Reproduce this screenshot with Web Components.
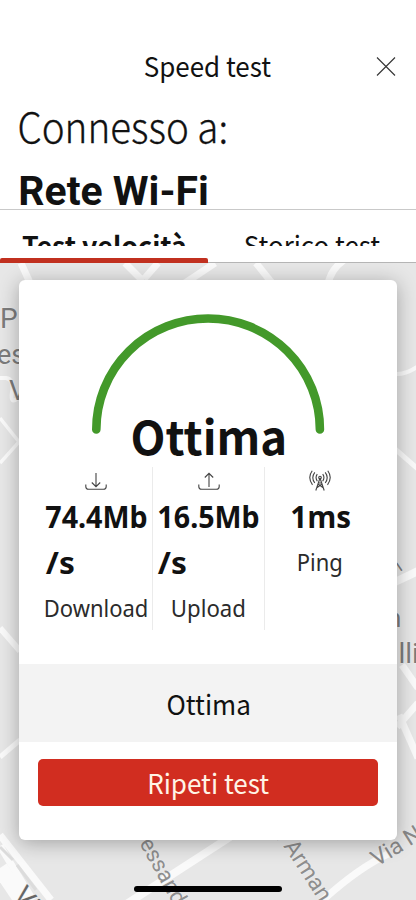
<!DOCTYPE html>
<html lang="it"><head><meta charset="utf-8"><title>Speed test</title>
<style>
html,body{margin:0;width:416px;height:900px;overflow:hidden;background:#fff;color:#111;font-family:"Noto Sans",sans-serif}
</style></head><body>
<speed-app></speed-app>
<script>
const make=(host,html)=>{host.attachShadow({mode:'open'}).innerHTML=html};

/* Single line whose ink fills w pixels across and whose capitals are h pixels high. */
customElements.define('fit-text',class extends HTMLElement{
 connectedCallback(){
  const w=+this.getAttribute('w'),h=+this.getAttribute('h'),wt=this.getAttribute('wt')||400,f=this.getAttribute('f')||'Noto Sans CJK SC';
  const t=this.getAttribute('text'),c=document.createElement('canvas').getContext('2d');
  c.font=`${wt} 100px "${f}"`;
  const size=h/c.measureText('H').actualBoundingBoxAscent*100;
  const m=c.measureText(t),k=size/100,ink=(m.actualBoundingBoxRight+m.actualBoundingBoxLeft)*k,s=(w-.8)/ink;
  make(this,`<style>:host{display:block;flex:none;width:${w}px;height:${h}px}
  span{display:block;white-space:pre;width:max-content;transform-origin:0 0;font:${wt} ${size}px/${h}px "${f}",sans-serif}</style><span></span>`);
  const e=this.shadowRoot.querySelector('span');e.textContent=t;
  const a=m.fontBoundingBoxAscent*k,d=m.fontBoundingBoxDescent*k,base=(h-a-d)/2+a;
  e.style.transform=`translate(${m.actualBoundingBoxLeft*k*s+.8}px,${h-base+.6}px) scaleX(${s})`;
 }});

customElements.define('page-header',class extends HTMLElement{constructor(){super();make(this,`<style>
:host{display:block;box-sizing:border-box;border-bottom:1px solid #c9c9c9;height:210px;padding-top:55.5px;background:#fff}
.bar{display:flex;padding-left:144px;height:20px}svg{margin:1px 0 0 105px;flex:none}
.t{padding:36px 0 0 19px;-webkit-text-stroke:.3px #111}.n{padding:34px 0 0 20.3px}</style>
<div class="bar"><fit-text text="Speed test" w="127" h="20"></fit-text><svg width="20" height="19" fill="none" stroke="#333" stroke-width="1.1"><path d="M1 .5 19 18.5M19 .5 1 18.5"/></svg></div>
<div class="t"><fit-text text="Connesso a:" w="206.5" h="30" wt="300"></fit-text></div>
<div class="n"><fit-text f="Roboto" text="Rete Wi-Fi" w="187" h="29.7" wt="700"></fit-text></div>`)}});

customElements.define('page-tabs',class extends HTMLElement{constructor(){super();make(this,`<style>
:host{display:grid;grid-template-columns:1fr 1fr;height:53px;box-sizing:border-box;border-bottom:1px solid #b5b5b5;background:#fff}
div{height:53px;display:flex;flex-direction:column;justify-content:space-between}
.c{display:block;height:10px;padding:26px 0 0 21.5px;overflow:hidden}.c.b{padding-left:35.5px}
i{height:5px;background:#c1301f;border-radius:2px 2px 0 0}</style>
<div><div class="c"><fit-text text="Test velocità" w="163" h="19.5" wt="700"></fit-text></div><i></i></div>
<div><div class="c b"><fit-text text="Storico test" w="136" h="19.5"></fit-text></div></div>`)}});

customElements.define('street-map',class extends HTMLElement{constructor(){super();make(this,`<style>:host{display:block;height:637px}svg{display:block;font:22px Roboto,sans-serif}text{fill:#7c7c7c;stroke:#efefef;stroke-width:1;paint-order:stroke}</style>
<svg width="416" height="637" viewBox="0 263 416 637"><path fill="#e7e7e7" d="M0 263h416v637H0z"/>
<g fill="none" stroke="#fafafa" stroke-width="7">
<path d="M21 263 31 285M125 263l18 18M215 263 170 293M144 279l14-16M256 263l16 20M344 260Q330 270 328 285"/>
<path stroke-width="4" d="M0 378h6q8 1 6 14t6 6"/><path stroke-width="3.500" d="M0 418 19 442 0 463"/>
<path stroke-width="4" d="M395 374q10 1 22-7"/><path stroke-width="6" d="M0 628 20 651"/><path stroke-width="5" d="M395 449 418 469M0 757 20 740"/><path stroke-width="8" d="M395 582 418 571"/>
<path d="M402 665 418 688M399 715 418 758M418 703 397 727M0 835 51 900M0 846 33 900"/><path stroke-width="16" d="M0 868 25 905"/>
<path stroke-width="8" d="M230 837 125 905"/><path d="M390 853Q358 868 322 901"/></g>
<path d="M0 847 13 860M17 865 36 890" stroke="#dcdcdc" stroke-width="3"/>
<text x="0" y="328" style="font-size:28px">P</text><text x="-3" y="363.500" style="font-size:27px">es</text><text x="9" y="399.500" style="font-size:28px">V</text>
<text transform="translate(400 572) rotate(-34)" style="font-size:18px">i</text><text x="387" y="627" style="font-size:26px">n</text><text x="398.500" y="663" style="font-size:28px">lli</text>
<text transform="translate(139 843) rotate(61)" style="fill:#8e8e8e;font-size:22.500px">essand</text>
<text transform="translate(275 837) rotate(56)" style="fill:#8e8e8e;font-size:24px">.</text>
<text transform="translate(283 846) rotate(57)" style="fill:#8e8e8e;font-size:23px">Arman</text>
<text transform="translate(377 867) rotate(-32)" style="fill:#8a8a8a;font-size:23px">Via N</text>
<text transform="translate(12 896) rotate(50)" style="fill:#666;font-size:27px">Vi</text></svg>`)}});

const icons={
down:'<path d="M11 3v13.500M6.800 12.500 11 16.700l4.200-4.200M.8 14.500v2q0 2.800 2.800 2.800h14.800q2.800 0 2.800-2.800v-2"/>',
up:'<path d="M11 17V3.300M6.800 7.500 11 3.300l4.200 4.200M.8 14.500v2q0 2.800 2.800 2.800h14.800q2.800 0 2.800-2.800v-2"/>',
mast:'<path d="M11 8 6.800 20.500M11 8l4.200 12.500M9 14l5.500 4M13 14l-5.500 4M9.300 13h3.400"/><circle cx="11" cy="7.500" r="1.300"/><path d="M8.300 4.200q-2.500 3.300 0 7M13.700 4.200q2.500 3.300 0 7M5.800 2.400q-4 5.300 0 10.600M16.200 2.400q4 5.300 0 10.600M3.200.8q-5 7 .3 14M18.800.8q5 7-.3 14"/>'};
customElements.define('metric-icon',class extends HTMLElement{connectedCallback(){make(this,`<style>:host{display:block;height:22px}svg{display:block;margin:auto}</style><svg width="22" height="22" fill="none" stroke="#444" stroke-width="1.100">${icons[this.getAttribute('kind')]}</svg>`)}});

customElements.define('speed-metric',class extends HTMLElement{constructor(){super();make(this,`<style>
:host{display:flex;flex-direction:column;box-sizing:border-box;padding-top:2.5px}</style><slot></slot>`)}});

customElements.define('speed-gauge',class extends HTMLElement{constructor(){super();make(this,`<style>:host{display:grid;height:187px}svg{grid-area:1/1}div{grid-area:1/1;padding:140px 0 0 112.700px}</style>
<svg width="378" height="187" fill="none" stroke="#43992a" stroke-width="8.600" stroke-linecap="round"><path d="M77.300 149.500A111.800 111 0 0 1 300.900 149.500"/></svg><div><fit-text text="Ottima" w="152" h="34.500" wt="700"></fit-text></div>`)}});

customElements.define('result-card',class extends HTMLElement{constructor(){super();make(this,`<style>
:host{display:block;width:378px;height:560px;background:#fff;border-radius:6px;box-shadow:0 3px 20px #0000004d}
.m{display:grid;grid-template-columns:134px 112px 1fr;height:163px}
.m>*{border-right:1px solid #ebebeb}.m>:last-child{border:0}
.s{height:78px;margin-top:34px;background:#f3f3f3;box-sizing:border-box;padding:30.700px 0 0 147.500px}
button{display:flex;align-items:flex-start;justify-content:flex-start;border:0;margin:17px 19px 0;width:340px;height:47px;background:#d12d20;border-radius:5px;color:#fff4e6;padding:15px 0 0 110.500px;box-sizing:border-box}
.d metric-icon{width:22px;margin-left:66px}.u metric-icon{width:22px;margin-left:44.500px}.p metric-icon{width:22px;margin-left:43.500px}
.l{color:#2b2b2b}
</style><speed-gauge></speed-gauge>
<div class="m"><speed-metric class="d"><metric-icon kind="down"></metric-icon>
<fit-text f="Noto Sans" text="74.4Mb" w="101.500" h="21.700" wt="700" style="margin:14px 0 0 26px"></fit-text>
<fit-text f="Noto Sans" text="/s" w="28.500" h="22" wt="700" style="margin:23.500px 0 0 26px"></fit-text>
<fit-text class="l" f="Noto Sans" text="Download" w="101.500" h="17" style="margin:27.300px 0 0 26px"></fit-text></speed-metric>
<speed-metric class="u"><metric-icon kind="up"></metric-icon>
<fit-text f="Noto Sans" text="16.5Mb" w="100.500" h="21.700" wt="700" style="margin:14px 0 0 5px"></fit-text>
<fit-text f="Noto Sans" text="/s" w="28.500" h="22" wt="700" style="margin:23.500px 0 0 4px"></fit-text>
<fit-text class="l" f="Noto Sans" text="Upload" w="72" h="17" style="margin:27.300px 0 0 19px"></fit-text></speed-metric>
<speed-metric class="p"><metric-icon kind="mast"></metric-icon>
<fit-text f="Open Sans" text="1ms" w="59" h="21.700" wt="700" style="margin:14px 0 0 25.500px"></fit-text>
<fit-text class="l" f="Noto Sans" text="Ping" w="43" h="17" style="margin:26.600px 0 0 33px"></fit-text></speed-metric></div>
<div class="s"><fit-text text="Ottima" w="82" h="19.500"></fit-text></div>
<button><fit-text text="Ripeti test" w="120" h="19.300"></fit-text></button>`)}});

customElements.define('speed-app',class extends HTMLElement{constructor(){super();make(this,`<style>
:host{display:block;width:416px;height:900px;overflow:hidden}
main{display:grid;height:637px;overflow:hidden}street-map,result-card,.h{grid-area:1/1}result-card{margin:17px 0 0 19px;z-index:1}
.h{z-index:2;width:148px;height:6px;border-radius:3px;background:#000;margin:622.500px 0 0 134px}</style>
<page-header></page-header><page-tabs></page-tabs><main><street-map></street-map><result-card></result-card><div class="h"></div></main>`)}});
</script></body></html>
